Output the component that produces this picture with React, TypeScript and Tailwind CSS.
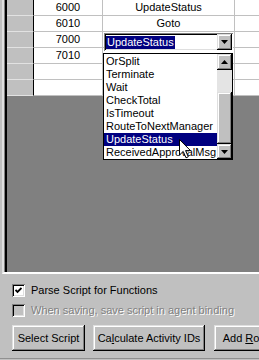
import React from "react";

const raised =
  "shadow-[inset_-1px_-1px_0_#000,inset_1px_1px_0_#dfdfdf,inset_-2px_-2px_0_#808080,inset_2px_2px_0_#fff]";
const sunken =
  "shadow-[inset_1px_1px_0_#808080,inset_-1px_-1px_0_#fff,inset_2px_2px_0_#000,inset_-2px_-2px_0_#dfdfdf]";

const rows = [
  { id: "6000", name: "UpdateStatus" },
  { id: "6010", name: "Goto" },
  { id: "7000", name: "", editing: true },
  { id: "7010", name: "" },
  { id: "", name: "" },
  { id: "", name: "" },
];

const items = [
  "OrSplit",
  "Terminate",
  "Wait",
  "CheckTotal",
  "IsTimeout",
  "RouteToNextManager",
  "UpdateStatus",
  "ReceivedApprovalMsg",
];

const Arrow = ({ up }: { up?: boolean }) => (
  <svg width="7" height="4" viewBox="0 0 7 4">
    <polygon points={up ? "0,4 7,4 3.5,0" : "0,0 7,0 3.5,4"} fill="#000" />
  </svg>
);

const Cursor = () => (
  <svg width="13" height="20" viewBox="0 0 13 20" className="absolute left-[75px] top-[85px] z-20">
    <path
      d="M0.5 0.5 L0.5 16 L4.2 12.4 L7 18.8 L9.3 17.8 L6.6 11.6 L11.5 11.6 Z"
      fill="#fff"
      stroke="#000"
      strokeWidth="1"
    />
  </svg>
);

const ComboEditor = () => (
  <>
    {/* combo box being edited */}
    <div className={`absolute left-[1px] top-[1px] z-10 h-[18px] w-[129px] bg-white text-left ${sunken}`}>
      <span className="absolute left-[2px] top-[3px] h-[13px] bg-[#000080] px-[1px] leading-[13px] text-white">
        UpdateStatus
      </span>
      <div className={`absolute right-[1px] top-[1px] flex h-[16px] w-[15px] items-center justify-center bg-[#c0c0c0] ${raised}`}>
        <Arrow />
      </div>
    </div>

    {/* open list */}
    <div className="absolute left-0 top-[21px] z-10 flex h-[107px] w-[130px] border border-black bg-white text-left">
      <div className="flex-1 pt-[1px]">
        {items.map((it) => (
          <div
            key={it}
            className={`h-[13px] whitespace-nowrap pl-[2px] leading-[13px] ${
              it === "UpdateStatus" ? "bg-[#000080] text-white" : "text-black"
            }`}
          >
            {it}
          </div>
        ))}
      </div>
      <div className="flex w-[15px] flex-col bg-[#e4e4e4]">
        <div className={`flex h-[16px] items-center justify-center bg-[#c0c0c0] ${raised}`}>
          <Arrow up />
        </div>
        <div className="h-[22px]" />
        <div className={`h-[52px] bg-[#c0c0c0] ${raised}`} />
        <div className={`flex flex-1 items-center justify-center bg-[#c0c0c0] ${raised}`}>
          <Arrow />
        </div>
      </div>
      <Cursor />
    </div>
  </>
);

const Check = ({ checked, disabled }: { checked?: boolean; disabled?: boolean }) => (
  <div
    className={`flex h-[13px] w-[13px] shrink-0 items-center justify-center ${
      disabled ? "bg-[#c0c0c0]" : "bg-white"
    } ${sunken}`}
  >
    {checked && (
      <svg width="7" height="7" viewBox="0 0 7 7">
        <polyline points="0.5,3 2.5,5 6.5,1" fill="none" stroke="#000" strokeWidth="1.8" />
      </svg>
    )}
  </div>
);

const Button = ({ w, children, className = "" }: { w: string; children: React.ReactNode; className?: string }) => (
  <div className={`flex h-[26px] shrink-0 items-center justify-center bg-[#c0c0c0] text-black ${raised} ${w} ${className}`}>
    <span className="whitespace-nowrap">{children}</span>
  </div>
);

export default function App() {
  return (
    <div className="h-[360px] w-[259px] overflow-hidden bg-[#c0c0c0] font-['Liberation_Sans',Arial,sans-serif] text-[11px] text-black">
      {/* grid frame */}
      <div className="h-[274px] pl-[2px]">
        <div className="h-full border-b-2 border-l-2 border-b-white border-l-[#dfdfdf]">
          <div className="h-full border-l border-[#808080]">
            <div className="flex h-full flex-col border-l-2 border-black bg-[#808080]">
              {rows.map((r, i) => (
                <div key={i} className="flex h-[16px] shrink-0">
                  <div className="w-[27px] shrink-0 border-r border-b border-r-black border-b-[#e2e2e2] bg-[#c0c0c0]" />
                  <div className="w-[69px] shrink-0 border-r border-b border-[#c0c0c0] bg-white text-center leading-[15px]">
                    {r.id}
                  </div>
                  <div className="relative w-[132px] shrink-0 border-r border-b border-[#c0c0c0] bg-white text-center leading-[15px]">
                    {r.name}
                    {r.editing && <ComboEditor />}
                  </div>
                  <div className="flex-1 border-b border-[#c0c0c0] bg-white" />
                </div>
              ))}
              <div className="flex-1" />
            </div>
          </div>
        </div>
      </div>

      {/* options + buttons */}
      <div className="flex h-[86px] flex-col">
        <div className="flex flex-col pl-[12px] pt-[10px]">
          <div className="flex h-[13px] items-center gap-[6px]">
            <Check checked />
            <span className="whitespace-nowrap">Parse Script for Functions</span>
          </div>
          <div className="mt-[7px] flex h-[13px] items-center gap-[6px]">
            <Check disabled />
            <span className="whitespace-nowrap text-[#808080] [text-shadow:1px_1px_0_#fff]">
              When saving, save script in agent binding
            </span>
          </div>
          <div className="mt-[8px] flex">
            <Button w="w-[73px]">Select Script</Button>
            <Button w="w-[112px]" className="ml-[8px]">
              Ca<span className="underline">l</span>culate Activity IDs
            </Button>
            <Button w="w-[62px]" className="ml-[9px]">
              Add <span className="underline">R</span>ow
            </Button>
          </div>
        </div>
        <div className="mt-auto mb-[1px] h-[1px] bg-[#909090]" />
      </div>
    </div>
  );
}
